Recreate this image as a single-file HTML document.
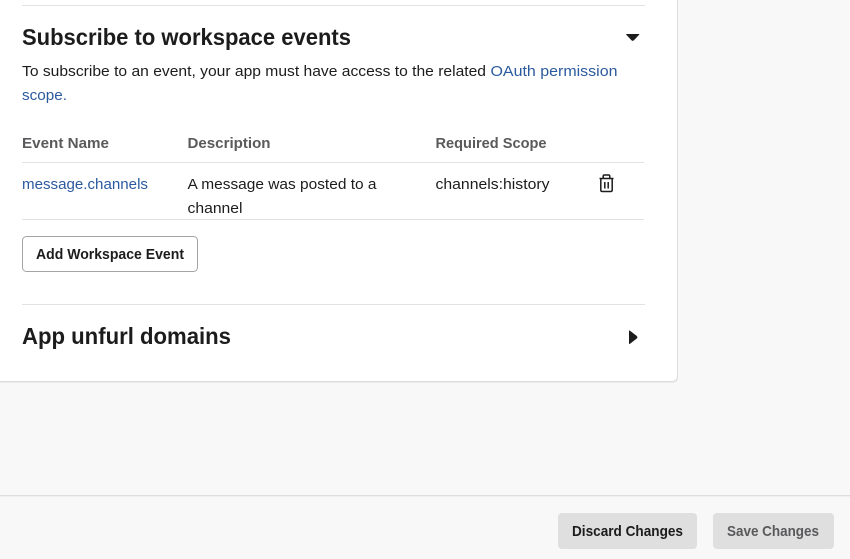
<!DOCTYPE html>
<html><head><meta charset="utf-8"><style>
html,body{margin:0;padding:0;width:850px;height:559px;overflow:hidden;background:#f8f8f8}
svg{display:block}
text{font-family:"Liberation Sans",sans-serif;fill:#1d1c1d;font-size:14.6px}
.h{font-size:23.5px;font-weight:700}
.b{font-weight:700}
.l{fill:#2c5a9e}
.th{fill:#5a595b;font-weight:700;font-size:14.6px}
</style></head><body>
<svg width="850" height="559" viewBox="0 0 850 559" xmlns="http://www.w3.org/2000/svg">
<rect width="850" height="559" fill="#f8f8f8"/>
<rect x="-10" y="-10" width="688" height="392.500" rx="5" fill="#dedede"/>
<rect x="-10" y="-10" width="687" height="391" rx="4.500" fill="#fff"/>
<rect x="22" y="5" width="623" height="1" fill="#e2e2e2"/>
<text class="h" x="22" y="45" textLength="329" lengthAdjust="spacingAndGlyphs">Subscribe to workspace events</text>
<path d="M626.500 34h12.500q.6 0 .2.6l-5 5.400q-1.500 1.800-3 0l-5-5.400q-.4-.6.300-.6z" fill="#1d1c1d"/>
<text x="22" y="76" textLength="464" lengthAdjust="spacingAndGlyphs">To subscribe to an event, your app must have access to the related</text>
<text class="l" x="490.500" y="76" textLength="127" lengthAdjust="spacingAndGlyphs">OAuth permission</text>
<text class="l" x="22" y="100" textLength="45" lengthAdjust="spacingAndGlyphs">scope.</text>
<text class="th" x="22" y="148" textLength="87" lengthAdjust="spacingAndGlyphs">Event Name</text>
<text class="th" x="187.500" y="148" textLength="83" lengthAdjust="spacingAndGlyphs">Description</text>
<text class="th" x="435.500" y="148" textLength="111" lengthAdjust="spacingAndGlyphs">Required Scope</text>
<rect x="22" y="162" width="622" height="1" fill="#e2e2e2"/>
<text class="l" x="22" y="189" textLength="126" lengthAdjust="spacingAndGlyphs">message.channels</text>
<text x="187.500" y="189" textLength="189" lengthAdjust="spacingAndGlyphs">A message was posted to a</text>
<text x="187.500" y="213" textLength="55" lengthAdjust="spacingAndGlyphs">channel</text>
<text x="435.500" y="189" textLength="114" lengthAdjust="spacingAndGlyphs">channels:history</text>
<g fill="none" stroke="#1d1c1d" stroke-width="1.500">
<path d="M599.500 178.500h14M603.200 178.200v-2q0-1.200 1.200-1.200h4.200q1.200 0 1.200 1.200v2"/>
<path d="M600.800 178.500v11.500q0 1.500 1.500 1.500h8.400q1.500 0 1.500-1.500v-11.500"/>
<path d="M604.800 182v6.500M608.200 182v6.500"/>
</g>
<rect x="22" y="219" width="622" height="1" fill="#e2e2e2"/>
<rect x="22.500" y="236.500" width="175" height="35" rx="4" fill="#fff" stroke="#a5a5a6"/>
<text class="b" x="36" y="259" textLength="148" lengthAdjust="spacingAndGlyphs">Add Workspace Event</text>
<rect x="22" y="304" width="623" height="1" fill="#e2e2e2"/>
<text class="h" x="22" y="344" textLength="209" lengthAdjust="spacingAndGlyphs">App unfurl domains</text>
<path d="M629 331q0-1 1-.3l6.500 5q1.800 1.500 0 3l-6.500 5q-1 .7-1-.3z" fill="#1d1c1d"/>
<rect x="0" y="495" width="850" height="1" fill="#dddddd"/>
<rect x="0" y="496" width="850" height="1" fill="#f0f0f0"/>
<rect x="558" y="513" width="139" height="36" rx="4" fill="#dfdfdf"/>
<text class="b" x="572" y="536" textLength="111" lengthAdjust="spacingAndGlyphs">Discard Changes</text>
<rect x="713" y="513" width="121" height="36" rx="4" fill="#dfdfdf"/>
<text class="b" x="727" y="536" textLength="92" lengthAdjust="spacingAndGlyphs" style="fill:#5a595b">Save Changes</text>
</svg>
</body></html>
